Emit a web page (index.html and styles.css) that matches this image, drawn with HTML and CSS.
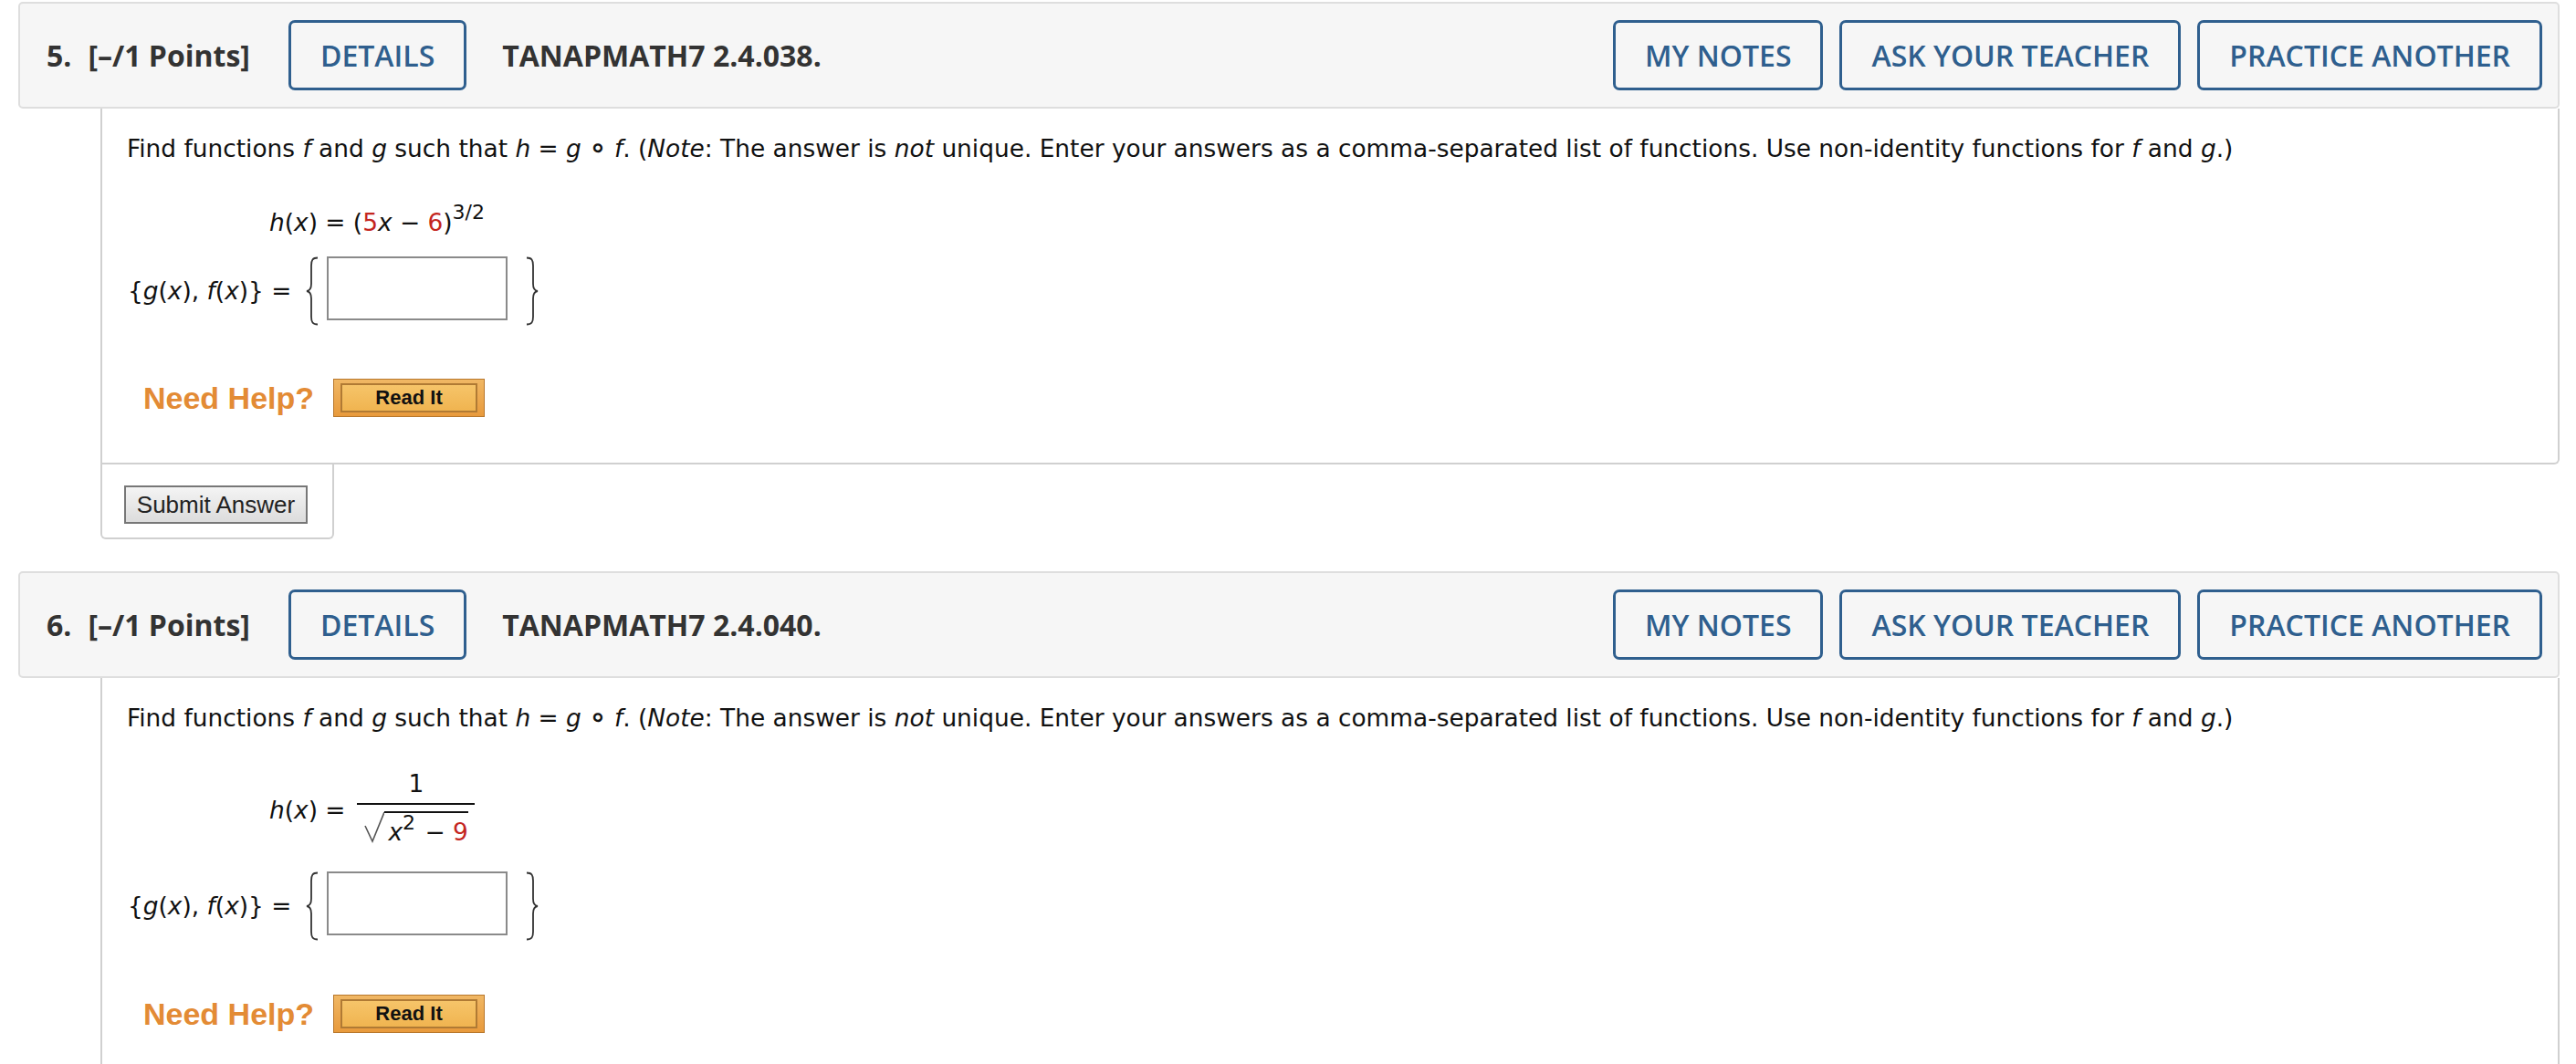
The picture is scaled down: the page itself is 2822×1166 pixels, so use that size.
FILE: index.html
```html
<!DOCTYPE html>
<html lang="en">
<head>
<meta charset="utf-8">
<title>Questions</title>
<link rel="stylesheet" href="styles.css">
</head>
<body>
<div class="page">

  <section class="question">
    <div class="q-head">
      <span class="qnum">5.</span>
      <span class="points">[–/1 Points]</span>
      <span class="btn details">DETAILS</span>
      <span class="code">TANAPMATH7 2.4.038.</span>
      <span class="spacer"></span>
      <div class="actions">
        <span class="btn">MY NOTES</span>
        <span class="btn">ASK YOUR TEACHER</span>
        <span class="btn">PRACTICE ANOTHER</span>
      </div>
    </div>
    <div class="q-body">
      <p class="prompt">Find functions <i>f</i> and <i>g</i> such that <i>h</i> = <i>g</i> <span class="comp">∘</span> <i>f</i>. (<i>Note</i>: The answer is <i>not</i> unique. Enter your answers as a comma-separated list of functions. Use non-identity functions for <i>f</i> and <i>g</i>.)</p>
      <div class="hrow"><i>h</i>(<i>x</i>) = (<span class="red">5</span><i>x</i> − <span class="red">6</span>)<span class="sup">3/2</span></div>
      <div class="answer">
        <span class="alabel">{<i>g</i>(<i>x</i>), <i>f</i>(<i>x</i>)} =</span>
        <svg class="brace lb" viewBox="0 0 16 76" width="16" height="76"><path d="M14,1.5 C8.5,1.5 7,4 7,10 L7,30 C7,35 5.5,37.5 2,38 C5.5,38.5 7,41 7,46 L7,66 C7,72 8.5,74.5 14,74.5"/></svg>
        <span class="inbox"></span>
        <svg class="brace rb" viewBox="0 0 16 76" width="16" height="76"><path d="M2,1.5 C7.5,1.5 9,4 9,10 L9,30 C9,35 10.5,37.5 14,38 C10.5,38.5 9,41 9,46 L9,66 C9,72 7.5,74.5 2,74.5"/></svg>
      </div>
      <div class="help">
        <span class="needhelp">Need Help?</span>
        <span class="readit"><span class="readit-in">Read It</span></span>
      </div>
    </div>
    <div class="q-submit"><span class="submit">Submit Answer</span></div>
  </section>

  <section class="question q2">
    <div class="q-head">
      <span class="qnum">6.</span>
      <span class="points">[–/1 Points]</span>
      <span class="btn details">DETAILS</span>
      <span class="code">TANAPMATH7 2.4.040.</span>
      <span class="spacer"></span>
      <div class="actions">
        <span class="btn">MY NOTES</span>
        <span class="btn">ASK YOUR TEACHER</span>
        <span class="btn">PRACTICE ANOTHER</span>
      </div>
    </div>
    <div class="q-body">
      <p class="prompt">Find functions <i>f</i> and <i>g</i> such that <i>h</i> = <i>g</i> <span class="comp">∘</span> <i>f</i>. (<i>Note</i>: The answer is <i>not</i> unique. Enter your answers as a comma-separated list of functions. Use non-identity functions for <i>f</i> and <i>g</i>.)</p>
      <div class="hrow2">
        <span class="hlabel"><i>h</i>(<i>x</i>) =</span>
        <span class="frac">
          <span class="num">1</span>
          <span class="bar"></span>
          <span class="den">
            <svg class="rad" viewBox="0 0 22 38" width="22" height="38"><polyline points="1,16 9,33 22,1"/></svg>
            <span class="radicand"><i>x</i><span class="sup2">2</span> − <span class="red">9</span></span>
          </span>
        </span>
      </div>
      <div class="answer">
        <span class="alabel">{<i>g</i>(<i>x</i>), <i>f</i>(<i>x</i>)} =</span>
        <svg class="brace lb" viewBox="0 0 16 76" width="16" height="76"><path d="M14,1.5 C8.5,1.5 7,4 7,10 L7,30 C7,35 5.5,37.5 2,38 C5.5,38.5 7,41 7,46 L7,66 C7,72 8.5,74.5 14,74.5"/></svg>
        <span class="inbox"></span>
        <svg class="brace rb" viewBox="0 0 16 76" width="16" height="76"><path d="M2,1.5 C7.5,1.5 9,4 9,10 L9,30 C9,35 10.5,37.5 14,38 C10.5,38.5 9,41 9,46 L9,66 C9,72 7.5,74.5 2,74.5"/></svg>
      </div>
      <div class="help">
        <span class="needhelp">Need Help?</span>
        <span class="readit"><span class="readit-in">Read It</span></span>
      </div>
    </div>
  </section>

</div>
</body>
</html>
```

FILE: styles.css
```css
* { box-sizing: border-box; }

html, body {
  margin: 0;
  padding: 0;
  background: #ffffff;
  overflow: hidden;
}

.page {
  padding: 2px 18px 0 20px;
  font-family: "DejaVu Sans", Verdana, sans-serif;
  color: #111;
}

.question.q2 { margin-top: 35px; }

/* header bar */
.q-head {
  display: flex;
  align-items: center;
  height: 117px;
  padding: 18px 17px 18px 29px;
  border: 2px solid #dedede;
  border-radius: 5px;
  background: #f6f6f6;
  font-family: "Open Sans", sans-serif;
}

.qnum, .points, .code {
  font-size: 32px;
  font-weight: 700;
  color: #333333;
  white-space: nowrap;
}

.qnum { margin-right: 18px; }
.details { margin-left: 42px; }
.code { margin-left: 39px; }
.spacer { flex: 1; }

.actions {
  display: flex;
  gap: 18px;
}

.btn {
  display: flex;
  align-items: center;
  justify-content: center;
  height: 77px;
  padding: 0 32px;
  border: 3px solid #2f5f8e;
  border-radius: 7px;
  background: #f6f6f6;
  color: #2f5f8e;
  font-size: 32px;
  font-weight: 600;
  white-space: nowrap;
}

/* body */
.q-body {
  margin-left: 90px;
  border: 2px solid #d0d0d0;
  border-top: none;
  border-bottom-right-radius: 6px;
  padding: 29px 27px 50px 27px;
  font-size: 26.4px;
  line-height: 30px;
}

.prompt {
  margin: 0;
  white-space: nowrap;
}

i { font-style: italic; }

.comp {
  font-weight: 700;
  font-size: 31px;
  line-height: 0;
}

.red { color: #c4261f; }

.hrow {
  margin-top: 51px;
  margin-left: 156px;
  height: 30px;
}

.sup {
  font-size: 22px;
  vertical-align: 13px;
  line-height: 0;
}

/* fraction row */
.hrow2 {
  display: flex;
  align-items: center;
  margin-top: 42px;
  margin-left: 156px;
}

.hlabel {
  padding-top: 5px;
  margin-right: 13px;
}

.frac {
  display: flex;
  flex-direction: column;
  align-items: stretch;
  width: 129px;
}

.num {
  text-align: center;
  line-height: 30px;
}

.bar {
  height: 2px;
  margin-top: 6px;
  background: #111;
}

.den {
  display: flex;
  align-items: flex-start;
  margin-top: 7px;
  padding-left: 8px;
}

.rad {
  flex: none;
}

.rad polyline {
  fill: none;
  stroke: #555;
  stroke-width: 1.6;
}

.radicand {
  border-top: 2px solid #111;
  padding: 6px 0 0 4px;
  width: 92px;
  line-height: 30px;
  white-space: nowrap;
}

.sup2 {
  font-size: 22px;
  vertical-align: 12px;
  line-height: 0;
  margin-right: 2px;
}

/* answer row */
.answer {
  display: flex;
  align-items: center;
  height: 76px;
  margin-top: 22px;
}

.q2 .answer { margin-top: 28px; }

.alabel {
  margin-left: 1px;
  margin-right: 15px;
  white-space: nowrap;
}

.brace path {
  fill: none;
  stroke: #333;
  stroke-width: 1.8;
}

.lb { margin-right: 8px; }
.rb { margin-left: 19px; }

.inbox {
  align-self: flex-start;
  width: 198px;
  height: 70px;
  border: 2px solid #8a8a8a;
  background: #fff;
}

/* help row */
.help {
  display: flex;
  align-items: center;
  margin-top: 58px;
  margin-left: 18px;
  height: 42px;
}

.q2 .help { margin-top: 59px; }

.needhelp {
  font-family: "Liberation Sans", Arial, sans-serif;
  font-weight: 700;
  font-size: 34px;
  color: #e38b35;
  margin-right: 21px;
  white-space: nowrap;
}

.readit {
  display: block;
  width: 166px;
  height: 42px;
  padding: 4px 7px;
  border: 1px solid #b8772c;
  background: linear-gradient(#f0b764, #e89a3c);
}

.readit-in {
  display: flex;
  align-items: center;
  justify-content: center;
  height: 100%;
  border: 2px solid #b07a34;
  background: linear-gradient(#f6c469, #f0b450);
  font-family: "Liberation Sans", Arial, sans-serif;
  font-weight: 700;
  font-size: 22px;
  color: #111;
}

/* submit tab */
.q-submit {
  margin-left: 90px;
  width: 256px;
  border: 2px solid #d0d0d0;
  border-top: none;
  border-radius: 0 0 6px 6px;
  padding: 23px 0 15px 24px;
}

.submit {
  display: flex;
  align-items: center;
  justify-content: center;
  width: 201px;
  height: 42px;
  border: 2px solid #777;
  background: linear-gradient(#f4f4f4, #dcdcdc);
  font-family: "Liberation Sans", Arial, sans-serif;
  font-size: 26px;
  color: #222;
}
```
